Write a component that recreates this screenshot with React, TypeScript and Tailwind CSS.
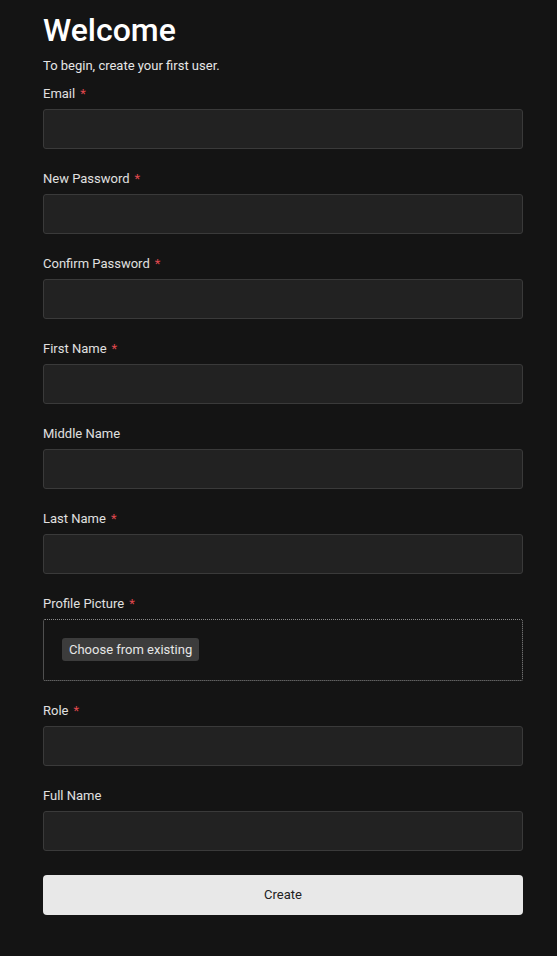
import React from 'react';

const fields = [
  { label: 'Email', required: true },
  { label: 'New Password', required: true },
  { label: 'Confirm Password', required: true },
  { label: 'First Name', required: true },
  { label: 'Middle Name', required: false },
  { label: 'Last Name', required: true },
];

const Label: React.FC<{ text: string; required?: boolean }> = ({ text, required }) => (
  <label className="block h-4 mb-[7px] text-[13px] leading-4 text-[#e0e0e0]">
    {text}
    {required && <span className="ml-[5px] text-[#e0484e]">*</span>}
  </label>
);

const TextField: React.FC<{ text: string; required?: boolean }> = ({ text, required }) => (
  <div className="mb-[22px]">
    <Label text={text} required={required} />
    <input
      type="text"
      className="block w-full h-10 rounded-[3px] border border-[#3a3a3a] bg-[#222222] px-3 text-[13px] text-white outline-none"
    />
  </div>
);

export default function App() {
  return (
    <div
      className="min-h-[956px] bg-[#141414] text-white"
      style={{ fontFamily: 'Roboto, "Noto Sans", sans-serif' }}
    >
      <div className="ml-[43px] w-[480px] pt-[12px]">
        <h1 className="text-[32px] leading-9 font-medium text-white">Welcome</h1>
        <p className="mt-[10px] mb-[12px] text-[13px] leading-4 text-[#e6e6e6]">
          To begin, create your first user.
        </p>
        {fields.map((f) => (
          <TextField key={f.label} text={f.label} required={f.required} />
        ))}
        <div className="mb-[22px]">
          <Label text="Profile Picture" required />
          <div className="h-[62px] rounded-[2px] border border-dotted border-[#8a8a8a] pl-[18px] pt-[17px]">
            <button className="h-[23px] rounded-[3px] bg-[#3c3c3c] px-[7px] text-[13px] leading-[23px] text-[#e6e6e6]">
              Choose from existing
            </button>
          </div>
        </div>
        <TextField text="Role" required />
        <TextField text="Full Name" />
        <button className="mt-[24px] block w-full h-10 rounded-[4px] bg-[#e8e8e8] text-[13px] text-[#222222]">
          Create
        </button>
      </div>
    </div>
  );
}
